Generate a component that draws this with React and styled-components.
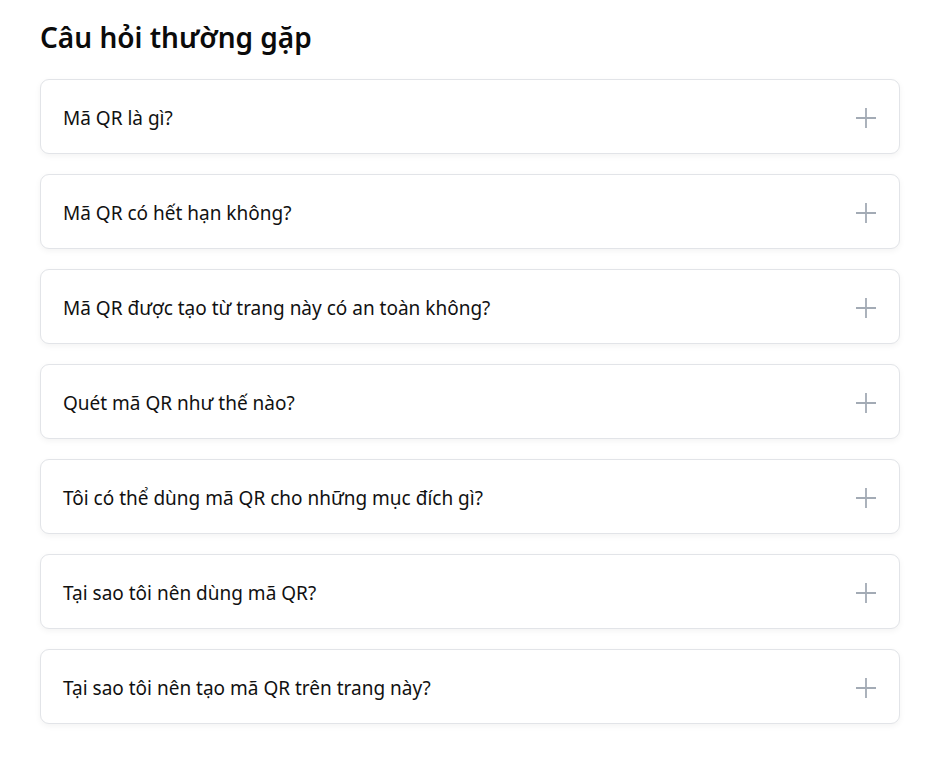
import React, { useState } from "react";
import styled, { createGlobalStyle } from "styled-components";

const GlobalStyle = createGlobalStyle`
  body {
    margin: 0;
    background: #ffffff;
    font-family: "Noto Sans", "Open Sans", sans-serif;
    color: #111111;
  }
`;

const questions = [
  "Mã QR là gì?",
  "Mã QR có hết hạn không?",
  "Mã QR được tạo từ trang này có an toàn không?",
  "Quét mã QR như thế nào?",
  "Tôi có thể dùng mã QR cho những mục đích gì?",
  "Tại sao tôi nên dùng mã QR?",
  "Tại sao tôi nên tạo mã QR trên trang này?",
];

export default function App() {
  const [open, setOpen] = useState(-1);

  return (
    <>
      <GlobalStyle />
      <Wrapper>
        <Title>Câu hỏi thường gặp</Title>
        <List>
          {questions.map((q, i) => (
            <Card key={q} onClick={() => setOpen(open === i ? -1 : i)}>
              <Question>{q}</Question>
              <PlusIcon />
            </Card>
          ))}
        </List>
      </Wrapper>
    </>
  );
}

function PlusIcon() {
  return (
    <Icon width="20" height="20" viewBox="0 0 20 20" fill="none">
      <path d="M10 0v20M0 10h20" stroke="#a3abb5" strokeWidth="1.8" />
    </Icon>
  );
}

const Wrapper = styled.div`
  padding: 17px 37px 40px 40px;
`;

const Title = styled.h2`
  margin: 0 0 22px;
  font-size: 28px;
  font-weight: 600;
  line-height: 40px;
  color: #0b0b0b;
`;

const List = styled.div`
  display: flex;
  flex-direction: column;
  gap: 20px;
`;

const Card = styled.div`
  display: flex;
  align-items: center;
  justify-content: space-between;
  height: 75px;
  box-sizing: border-box;
  padding: 2px 23px 0 22px;
  border: 1px solid #e2e4e8;
  border-radius: 9px;
  background: #fff;
  box-shadow: 0 2px 6px rgba(0, 0, 0, 0.05);
  cursor: pointer;
`;

const Question = styled.span`
  font-size: 19px;
  color: #111;
`;

const Icon = styled.svg`
  flex-shrink: 0;
`;
